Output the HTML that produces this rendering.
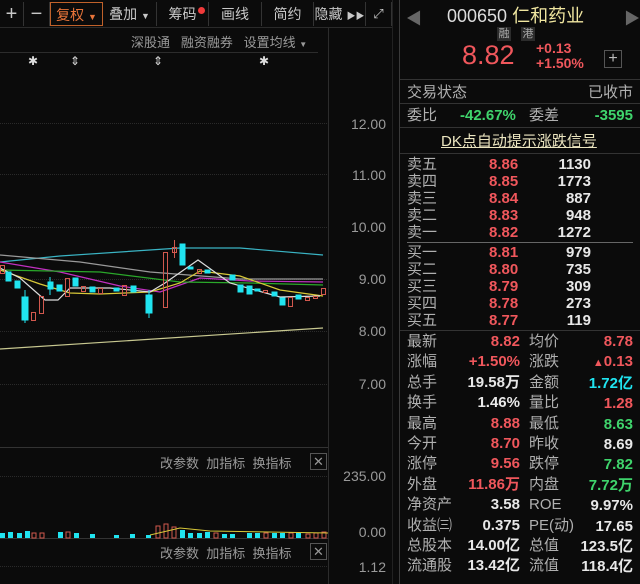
<!DOCTYPE html>
<html><head><meta charset="utf-8"><style>
*{margin:0;padding:0;box-sizing:border-box}
body{width:640px;height:584px;background:#0b0b0b;overflow:hidden;position:relative;font-family:"Liberation Sans","Noto Sans CJK SC",sans-serif;color:#bbb}
.a{position:absolute;white-space:nowrap}
.tb{position:absolute;top:2px;height:24px;border-right:1px solid #333;color:#c8c8c8;font-size:14px;line-height:24px;text-align:center}
.r{color:#f0575c}.g{color:#3fd46c}.w{color:#e8e8e8}.c{color:#20e4f0}.l{color:#b0b0b0}
.ax{position:absolute;right:254px;font-size:14px;color:#9a9a9a}
.st{position:absolute;font-size:15px;line-height:20px}
.ob{position:absolute;font-size:15px;line-height:17px}
</style></head><body>
<!-- toolbar -->
<div class="a" style="left:0;top:0;width:392px;height:28px;background:#0b0b0b;border-bottom:1px solid #2a2a2a"></div>
<div class="tb" style="left:0;width:24px;font-size:20px">+</div>
<div class="tb" style="left:24px;width:26px;font-size:20px">−</div>
<div class="tb" style="left:50px;width:53px;border:1px solid #c0612a;color:#e8743a">复权 <span style="font-size:9px">▼</span></div>
<div class="tb" style="left:103px;width:54px">叠加 <span style="font-size:9px">▼</span></div>
<div class="tb" style="left:157px;width:52px">筹码<span style="position:absolute;left:41px;top:5px;width:7px;height:7px;border-radius:50%;background:#f03a3a"></span></div>
<div class="tb" style="left:209px;width:53px">画线</div>
<div class="tb" style="left:262px;width:52px">简约</div>
<div class="tb" style="left:314px;width:52px">隐藏 <span style="font-size:9px">▶▶</span></div>
<div class="tb" style="left:366px;width:26px;font-size:13px">⤢</div>
<div class="a" style="left:131px;top:32px;font-size:13px;color:#9a9a9a">深股通 &nbsp; 融资融券 &nbsp; 设置均线 <span style="font-size:8px">▼</span></div>
<div class="a" style="left:0;top:52px;width:318px;height:1px;background:#2c2c2c"></div>
<div class="a" style="left:28px;top:54px;font-size:12px;color:#ddd">✱</div>
<div class="a" style="left:70px;top:54px;font-size:12px;color:#ddd">⇕</div>
<div class="a" style="left:153px;top:54px;font-size:12px;color:#ddd">⇕</div>
<div class="a" style="left:259px;top:54px;font-size:12px;color:#ddd">✱</div>
<!-- vertical lines -->
<div class="a" style="left:328px;top:28px;width:1px;height:556px;background:#2c2c2c"></div>
<div class="a" style="left:392px;top:0;width:1px;height:584px;background:#222"></div>
<div class="a" style="left:399px;top:0;width:1px;height:584px;background:#3a3a3a"></div>
<!-- axis labels -->
<div class="ax" style="top:116px">12.00</div>
<div class="ax" style="top:167px">11.00</div>
<div class="ax" style="top:219px">10.00</div>
<div class="ax" style="top:271px">9.00</div>
<div class="ax" style="top:323px">8.00</div>
<div class="ax" style="top:376px">7.00</div>
<div class="ax" style="top:468px">235.00</div>
<div class="ax" style="top:524px">0.00</div>
<div class="ax" style="top:559px">1.12</div>
<svg class="a" style="left:0;top:0" width="330" height="584">
<g stroke="#2a2a2a" stroke-dasharray="1,1">
<line x1="0" y1="123.5" x2="328" y2="123.5"/><line x1="0" y1="174.5" x2="328" y2="174.5"/>
<line x1="0" y1="227.5" x2="328" y2="227.5"/><line x1="0" y1="279.5" x2="328" y2="279.5"/>
<line x1="0" y1="331.5" x2="328" y2="331.5"/><line x1="0" y1="384.5" x2="328" y2="384.5"/>
<line x1="0" y1="476.5" x2="328" y2="476.5"/><line x1="0" y1="566.5" x2="328" y2="566.5"/>
</g>
<line x1="0" y1="447.5" x2="328" y2="447.5" stroke="#333"/>
<line x1="0" y1="538.5" x2="328" y2="538.5" stroke="#333"/>
<g fill="none" stroke-width="1.2">
<polyline stroke="#3ab4c4" points="0,262 60,256 180,248 240,248 323,255"/>
<polyline stroke="#9a9a9a" points="0,255 80,262 150,272 240,279 323,279"/>
<polyline stroke="#c030c0" points="0,262 60,272 120,286 160,292 200,278 250,281 323,282"/>
<polyline stroke="#2aa82a" points="0,270 100,272 180,282 250,283 323,285"/>
<polyline stroke="#d8c838" points="0,270 40,284 70,293 100,294 150,292 180,283 200,271 240,276 280,290 323,296"/>
<polyline stroke="#dddddd" points="0,268 20,278 45,300 58,300 70,288 110,288 150,292 165,283 198,260 230,283 280,297 320,296"/>
<polyline stroke="#c8c890" points="0,349 323,328"/>
</g>
<g fill="#20e4f0" stroke="#20e4f0">
<rect x="6" y="272" width="5" height="9"/><rect x="22" y="297" width="6" height="23"/><line x1="25" y1="290" x2="25" y2="323"/>
<rect x="15" y="281" width="5" height="7"/><rect x="48" y="282" width="5" height="7"/><line x1="50" y1="277" x2="50" y2="295"/>
<rect x="57" y="285" width="5" height="6"/><rect x="73" y="278" width="5" height="8"/><rect x="90" y="287" width="5" height="5"/>
<rect x="114" y="288" width="5" height="3"/><rect x="131" y="286" width="5" height="6"/><rect x="146" y="295" width="6" height="18"/><line x1="149" y1="290" x2="149" y2="318"/>
<rect x="180" y="244" width="5" height="21"/><rect x="188" y="267" width="5" height="2"/><rect x="205" y="270" width="5" height="3"/>
<rect x="230" y="275" width="5" height="5"/><rect x="238" y="285" width="5" height="7"/><rect x="247" y="286" width="5" height="8"/>
<rect x="255" y="289" width="5" height="2"/><rect x="272" y="292" width="5" height="4"/><rect x="280" y="298" width="5" height="7"/><rect x="296" y="295" width="5" height="4"/>
</g>
<g fill="none" stroke="#d2584e">
<rect x="0.5" y="265.5" width="4" height="8"/><rect x="31.5" y="312.5" width="4" height="8"/><rect x="39.5" y="296.5" width="4" height="17"/>
<rect x="65.5" y="278.5" width="4" height="18"/><rect x="81.5" y="286.5" width="4" height="5"/><rect x="98.5" y="288.5" width="4" height="5"/>
<rect x="122.5" y="285.5" width="4" height="10"/><rect x="163.5" y="252.5" width="4" height="55"/><rect x="172.5" y="247.5" width="4" height="5"/><line x1="174.5" y1="240" x2="174.5" y2="258"/>
<rect x="197.5" y="269.5" width="4" height="4"/><rect x="263.5" y="290.5" width="4" height="2"/><rect x="288.5" y="297.5" width="4" height="9"/>
<rect x="305.5" y="297.5" width="4" height="3"/><rect x="313.5" y="296.5" width="4" height="2"/><rect x="321.5" y="288.5" width="4" height="6"/>
</g>
<g>
<rect x="0" y="533" width="328" height="5" fill="none"/>
<path d="M0 533h5v5H0zM8 532h5v6H8zM17 533h5v5h-5zM25 531h5v7h-5zM58 532h5v6h-5zM74 533h5v5h-5zM90 534h5v4h-5zM114 535h5v3h-5zM130 534h5v4h-5zM146 535h5v3h-5zM180 530h5v8h-5zM188 533h5v5h-5zM197 533h5v5h-5zM205 532h5v6h-5zM222 534h5v4h-5zM230 534h5v4h-5zM247 533h5v5h-5zM255 533h5v5h-5zM272 533h5v5h-5zM280 533h5v5h-5zM296 533h5v5h-5z" fill="#20e4f0"/>
<path d="M32 533h4v5h-4zM40 533h4v5h-4zM66 532h4v6h-4zM156 526h4v12h-4zM164 524h4v14h-4zM172 527h4v11h-4zM214 533h4v5h-4zM264 533h4v5h-4zM289 533h4v5h-4zM306 534h4v4h-4zM314 533h4v5h-4zM322 532h4v6h-4z" fill="none" stroke="#d2584e"/>
<polyline fill="none" stroke="#d8c838" points="150,535 180,528 210,531 328,533"/>
</g>
</svg>
<div class="a" style="left:160px;top:453px;font-size:13px;color:#9a9a9a">改参数 &nbsp;加指标 &nbsp;换指标</div>
<div class="a" style="left:310px;top:453px;width:17px;height:17px;border:1px solid #555;color:#999;font-size:13px;line-height:15px;text-align:center">✕</div>
<div class="a" style="left:160px;top:543px;font-size:13px;color:#9a9a9a">改参数 &nbsp;加指标 &nbsp;换指标</div>
<div class="a" style="left:310px;top:543px;width:17px;height:17px;border:1px solid #555;color:#999;font-size:13px;line-height:15px;text-align:center">✕</div>
<!-- right panel -->
<div class="a" style="left:406px;top:5px;color:#666;font-size:16px">◀</div>
<div class="a" style="left:624px;top:5px;color:#666;font-size:16px">▶</div>
<div class="a w" style="left:447px;top:2px;font-size:18px;color:#ddd">000650 <span style="color:#f0e6a0">仁和药业</span></div>
<div class="a" style="left:497px;top:27px;width:14px;height:14px;background:#2c2c2c;color:#aaa;font-size:11px;line-height:14px;text-align:center">融</div>
<div class="a" style="left:521px;top:27px;width:14px;height:14px;background:#2c2c2c;color:#aaa;font-size:11px;line-height:14px;text-align:center">港</div>
<div class="a r" style="left:462px;top:40px;font-size:27px">8.82</div>
<div class="a r" style="left:536px;top:41px;font-size:14px;line-height:15px;font-weight:bold">+0.13<br>+1.50%</div>
<div class="a" style="left:604px;top:50px;width:18px;height:18px;border:1px solid #555;color:#bbb;font-size:16px;line-height:15px;text-align:center">+</div>
<div class="a" style="left:400px;top:79px;width:240px;height:1px;background:#333"></div>
<div class="st l" style="left:407px;top:83px">交易状态</div><div class="st l" style="right:7px;top:83px">已收市</div>
<div class="a" style="left:400px;top:103px;width:240px;height:1px;background:#333"></div>
<div class="st l" style="left:407px;top:106px">委比</div><div class="st g" style="left:460px;top:106px;font-weight:bold">-42.67%</div>
<div class="st l" style="left:529px;top:106px">委差</div><div class="st g" style="right:7px;top:106px;font-weight:bold">-3595</div>
<div class="a" style="left:400px;top:127px;width:240px;height:1px;background:#333"></div>
<div class="st" style="left:441px;top:132px;color:#ece6c0;text-decoration:underline">DK点自动提示涨跌信号</div>
<div class="a" style="left:400px;top:153px;width:240px;height:1px;background:#333"></div>
<div class="ob l" style="left:407px;top:156px">卖五<br>卖四<br>卖三<br>卖二<br>卖一</div>
<div class="ob r" style="left:489px;top:156px;font-weight:bold">8.86<br>8.85<br>8.84<br>8.83<br>8.82</div>
<div class="ob w" style="right:49px;top:156px;text-align:right;font-weight:bold">1130<br>1773<br>887<br>948<br>1272</div>
<div class="a" style="left:407px;top:242px;width:226px;height:1px;background:#666"></div>
<div class="ob l" style="left:407px;top:244px">买一<br>买二<br>买三<br>买四<br>买五</div>
<div class="ob r" style="left:489px;top:244px;font-weight:bold">8.81<br>8.80<br>8.79<br>8.78<br>8.77</div>
<div class="ob w" style="right:49px;top:244px;text-align:right;font-weight:bold">979<br>735<br>309<br>273<br>119</div>
<div class="a" style="left:400px;top:330px;width:240px;height:1px;background:#333"></div>
<div class="st l" style="left:407px;top:332px;line-height:20.4px">最新<br>涨幅<br>总手<br>换手<br>最高<br>今开<br>涨停<br>外盘<br>净资产<br>收益㈢<br>总股本<br>流通股</div>
<div class="st" style="right:120px;top:332px;line-height:20.4px;text-align:right;font-weight:bold"><span class="r">8.82</span><br><span class="r">+1.50%</span><br><span class="w">19.58万</span><br><span class="w">1.46%</span><br><span class="r">8.88</span><br><span class="r">8.70</span><br><span class="r">9.56</span><br><span class="r">11.86万</span><br><span class="w">3.58</span><br><span class="w">0.375</span><br><span class="w">14.00亿</span><br><span class="w">13.42亿</span></div>
<div class="st l" style="left:529px;top:332px;line-height:20.4px">均价<br>涨跌<br>金额<br>量比<br>最低<br>昨收<br>跌停<br>内盘<br>ROE<br>PE(动)<br>总值<br>流值</div>
<div class="st" style="right:7px;top:332px;line-height:20.4px;text-align:right;font-weight:bold"><span class="r">8.78</span><br><span class="r"><span style="font-size:11px">▲</span>0.13</span><br><span class="c">1.72亿</span><br><span class="r">1.28</span><br><span class="g">8.63</span><br><span class="w">8.69</span><br><span class="g">7.82</span><br><span class="g">7.72万</span><br><span class="w">9.97%</span><br><span class="w">17.65</span><br><span class="w">123.5亿</span><br><span class="w">118.4亿</span></div>
</body></html>
